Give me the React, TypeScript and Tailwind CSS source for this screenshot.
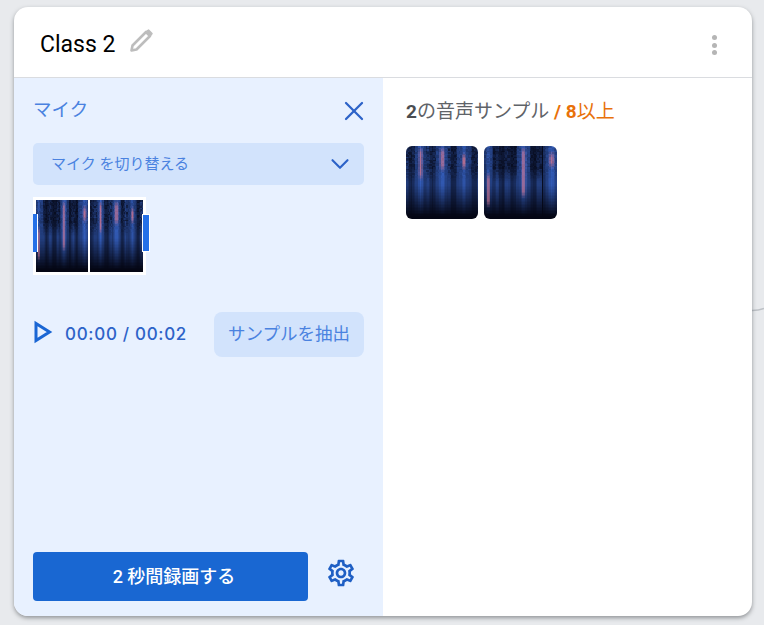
import { ChevronDown, X } from "lucide-react";
import { MdOutlineSettings } from "react-icons/md";

const jp = "font-['Roboto','Noto_Sans_CJK_JP',sans-serif]";

// small seeded noise so the spectrograms stay the same between runs
function noise(a: number, b: number) {
    const v = Math.sin(a * 12.9898 + b * 78.233) * 43758.5453;
    return v - Math.floor(v);
}

function mix(a: number, b: number, t: number) {
    return Math.round(a + (b - a) * t);
}

function colorFor(v: number, pink: number) {
    const t = Math.max(0, Math.min(1, v));
    const r = 4 + 50 * t;
    const g = 6 + 92 * t;
    const b = 20 + 175 * t;
    return `rgb(${mix(r, 205, pink)},${mix(g, 115, pink)},${mix(b, 140, pink)})`;
}

type Band = { x: number; w: number; level: number; pink?: [number, number] };

function Spectrogram({ bands, seed, dark = 0.7, holes = [], className }: { bands: Band[]; seed: number; dark?: number; holes?: number[]; className?: string }) {
    const size = 48;
    const cells = [];
    for (let c = 0; c < size; c++) {
        const x = (c + 0.5) / size;
        let col = 0.42 + 0.16 * Math.sin(c * 0.9 + seed) + 0.1 * noise(c, seed);
        for (const h of holes) {
            if (Math.abs(x - h) < 0.035) col = 0.08;
        }
        for (let r = 0; r < size; r++) {
            const y = (r + 0.5) / size;
            let v = col;
            let pink = 0;
            let glow = 0;
            for (const b of bands) {
                const d = Math.abs(x - b.x) / b.w;
                if (d < 1) {
                    glow = Math.max(glow, 1 - d);
                    v = Math.max(v, b.level * (1 - d * 0.55));
                    if (b.pink) {
                        const edge = Math.min(1, Math.min(y - b.pink[0], b.pink[1] - y) / 0.1);
                        if (edge > 0) pink = Math.max(pink, edge * 0.85 * Math.max(0, 1 - d * 2.2));
                    }
                }
            }
            // the upper part is dark and grainy, the lower part fades out to black
            const upper = Math.max(0, Math.min(1, (0.5 - y) / 0.2));
            const grain = dark * (0.5 + noise(c + seed, r) * 0.9);
            const grainy = glow > 0 ? 0.8 + noise(c + seed, r) * 0.3 : grain;
            v *= 1 + (grainy - 1) * upper;
            const fade = y > 0.52 ? Math.max(0, 1 - Math.pow((y - 0.52) / 0.44, 1.1)) : 1;
            cells.push(<rect key={c + "-" + r} x={c} y={r} width={1} height={1} fill={colorFor(v * fade, pink)} />);
        }
    }
    return (
        <svg viewBox="0 0 48 48" preserveAspectRatio="none" shapeRendering="crispEdges" className={className}>
            {cells}
        </svg>
    );
}

const bandsA: Band[] = [
    { x: 0.2, w: 0.07, level: 0.95, pink: [0.0, 0.48] },
    { x: 0.5, w: 0.09, level: 0.95, pink: [0.0, 0.36] },
    { x: 0.8, w: 0.09, level: 0.85, pink: [0.08, 0.34] },
];
const bandsB: Band[] = [
    { x: 0.06, w: 0.07, level: 0.85, pink: [0.36, 0.85] },
    { x: 0.54, w: 0.08, level: 1, pink: [0, 0.72] },
    { x: 0.93, w: 0.11, level: 0.95, pink: [0.06, 0.32] },
];

export default function App() {
    return (
        <div className={`relative w-[764px] h-[625px] overflow-hidden bg-[#e8eaed] pl-[14px] pt-[7px] ${jp}`}>
            <svg className="absolute right-0 top-[299px] w-[12px] h-[20px]" viewBox="0 0 12 20" fill="none">
                <path d="M0 11.5C5 11.5 8 11 12 9.5" stroke="#bdc1c6" strokeWidth="1.5" />
            </svg>

            <div className="relative w-[738px] h-[609px] bg-white rounded-[14px] overflow-hidden shadow-[0_2px_4px_rgba(60,64,67,0.5)] flex flex-col">
                <div className="h-[71px] shrink-0 border-b border-[#dadce0] flex items-center pl-[26px] pr-[35px]">
                    <span className="mt-[6px] text-[23px] text-black">Class 2</span>
                    <svg className="ml-[14px] mb-[3px] w-[24px] h-[24px]" viewBox="0 0 24 24" fill="none">
                        <path d="M2.5 21.5L3.5 16.5L17 3L21 7L7.5 20.5Z" stroke="#bdbdbd" strokeWidth="2.6" strokeLinejoin="round" />
                        <path d="M18 2L19.5 1L23 4.5L22 6Z" fill="#bdbdbd" stroke="#bdbdbd" strokeWidth="1.5" strokeLinejoin="round" />
                    </svg>
                    <div className="ml-auto mt-[6px] flex flex-col gap-[2.4px]">
                        <span className="w-[5px] h-[5px] rounded-full bg-[#b5b5b5]" />
                        <span className="w-[5px] h-[5px] rounded-full bg-[#b5b5b5]" />
                        <span className="w-[5px] h-[5px] rounded-full bg-[#b5b5b5]" />
                    </div>
                </div>

                <div className="flex flex-1 min-h-0">
                    <div className="w-[369px] shrink-0 bg-[#e8f1ff] px-[19px] flex flex-col">
                        <div className="flex justify-between pt-[19px] h-[65px] items-start">
                            <span className="text-[18.5px] leading-[26px] text-[#4a82e0]">マイク</span>
                            <X className="-mt-[2px] -mr-[6px] text-[#2d63c8]" size={32} strokeWidth={1.7} />
                        </div>
                        <div className="h-[42px] rounded-[5px] bg-[#d2e3fc] flex items-center justify-between pl-[18px] pr-[9px]">
                            <span className="text-[15px] text-[#4a82e0]">マイク を切り替える</span>
                            <ChevronDown className="text-[#2d63c8]" size={30} strokeWidth={1.7} />
                        </div>

                        <div className="relative mt-[12px] w-[113px] h-[78px] bg-white p-[3px] flex gap-[2px]">
                            <Spectrogram className="w-[52px] h-[72px]" bands={bandsB} seed={9} dark={0.45} />
                            <Spectrogram className="w-[53px] h-[72px]" bands={bandsA} seed={4} />
                            <span className="absolute left-0 top-[17px] w-[5px] h-[38px] bg-[#2470e8] border-r border-white" />
                            <span className="absolute -right-[4px] top-[17px] w-[8px] h-[38px] bg-[#2470e8] border border-white" />
                        </div>

                        <div className="mt-[37px] flex items-center h-[45px]">
                            <svg className="w-[20px] h-[24px] mb-[5px]" viewBox="0 0 20 24" fill="none">
                                <path d="M3 3.5V20.5L16.5 12Z" stroke="#1a66d4" strokeWidth="3" />
                            </svg>
                            <span className="ml-[12px] font-['Inter',sans-serif] font-medium text-[17px] text-[#2d63c8] tracking-[0.7px]">00:00 / 00:02</span>
                            <div className="ml-auto w-[150px] h-[45px] rounded-[8px] bg-[#d2e3fc] flex items-center justify-center text-[17.5px] text-[#4a82e0]">
                                サンプルを抽出
                            </div>
                        </div>

                        <div className="mt-auto mb-[15px] flex items-center">
                            <div className="w-[275px] h-[49px] pl-[7px] rounded-[4px] bg-[#1967d2] flex items-center justify-center text-white font-medium text-[18px]">
                                2 秒間録画する
                            </div>
                            <MdOutlineSettings className="ml-[17px] mb-[8px] text-[#1f5fc4]" size={32} />
                        </div>
                    </div>

                    <div className="flex-1 pl-[23px] pt-[21px]">
                        <p className="text-[19px] leading-[26px] text-[#5f6368] whitespace-nowrap">
                            <span className="font-bold text-[#4a4d51]">2</span>の音声サンプル <span className="font-bold text-[#e8710a]">/ 8</span>
                            <span className="text-[#e8710a]">以上</span>
                        </p>
                        <div className="mt-[21px] flex gap-[6px]">
                            <Spectrogram className="w-[72px] h-[73px] rounded-[6px]" bands={bandsA} seed={2} />
                            <Spectrogram className="w-[73px] h-[73px] rounded-[6px]" bands={bandsB} seed={7} dark={0.45} holes={[0.82]} />
                        </div>
                    </div>
                </div>
            </div>
        </div>
    );
}
